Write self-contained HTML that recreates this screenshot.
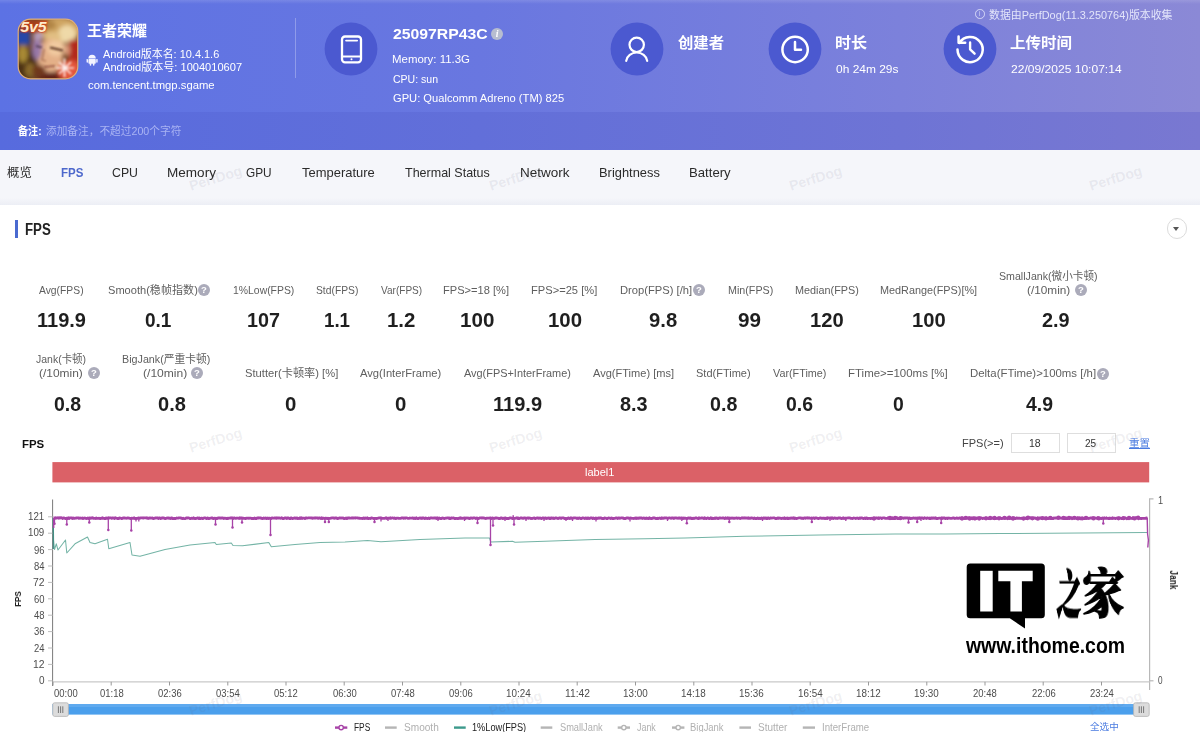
<!DOCTYPE html>
<html lang="zh-CN">
<head>
<meta charset="utf-8">
<title>PerfDog - FPS</title>
<style>
html,body{margin:0;padding:0;}
body{width:1200px;height:732px;position:relative;overflow:hidden;background:#fff;font-family:"Liberation Sans","Noto Sans CJK SC",sans-serif;}
.t{position:absolute;white-space:nowrap;transform-origin:0 50%;line-height:28px;}
.abs{position:absolute;}
#hdr{left:0;top:0;width:1200px;height:112px;background:linear-gradient(90deg,#5c72e4 0%,#6977e0 40%,#7c81db 75%,#8b89d6 100%);}
#sub{left:0;top:112px;width:1200px;height:37.5px;background:linear-gradient(90deg,#576bde 0%,#626fd9 40%,#6e74d5 75%,#7978d1 100%);}
#tabs{left:0;top:149.5px;width:1200px;height:56px;background:#f5f6fa;}
#card{left:0;top:205px;width:1200px;height:527px;background:#fff;}
.ic{border-radius:50%;color:#fff;text-align:center;box-sizing:content-box;will-change:transform;}
.wm{font-size:14px;font-weight:700;width:55px;text-align:center;color:rgba(100,100,125,0.10);transform:rotate(-17deg);transform-origin:50% 50%;}
.zj{font-family:"Liberation Serif","Noto Serif CJK SC",serif;font-weight:900;line-height:56px;color:#000;transform-origin:0 50%;will-change:transform;-webkit-text-stroke:1.1px #000;}
</style>
</head>
<body>
<div class="abs" id="hdr"></div>
<div class="abs" id="sub"></div>
<div class="abs" id="tabs"></div>
<div class="abs" id="card"></div>
<div class="abs" style="left:0;top:0;width:1200px;height:4px;background:linear-gradient(180deg,rgba(255,255,255,0.13),rgba(255,255,255,0))"></div>
<div class="abs" style="left:294.5px;top:18px;width:1.5px;height:60px;background:rgba(255,255,255,0.28)"></div>
<svg class="abs" style="left:17px;top:18px" width="62" height="62" viewBox="0 0 62 62">
<defs><clipPath id="gi"><rect x="1.5" y="1.5" width="59" height="59" rx="12" ry="12"/></clipPath>
<filter id="b3" x="-30%" y="-30%" width="160%" height="160%"><feGaussianBlur stdDeviation="2"/></filter>
<filter id="b1" x="-30%" y="-30%" width="160%" height="160%"><feGaussianBlur stdDeviation="0.9"/></filter></defs>
<rect x="1" y="1" width="60" height="60" rx="12.5" fill="#d9a36a"/>
<g clip-path="url(#gi)">
<rect x="0" y="0" width="62" height="62" fill="#6e4426"/>
<g filter="url(#b3)">
<rect x="-4" y="10" width="17" height="17" fill="#2546a8"/>
<ellipse cx="9" cy="46" rx="11" ry="16" fill="#4e3214"/>
<ellipse cx="6" cy="36" rx="5" ry="9" fill="#a88a34"/>
<ellipse cx="13" cy="52" rx="5" ry="7" fill="#8a6a2a"/>
<ellipse cx="42" cy="12" rx="22" ry="13" fill="#cfa562"/>
<ellipse cx="50" cy="16" rx="9" ry="9" fill="#efd9a8"/>
<ellipse cx="30" cy="7" rx="9" ry="5" fill="#b08444"/>
<ellipse cx="36" cy="18" rx="8" ry="4" fill="#e2c084"/>
<rect x="52" y="22" width="12" height="22" fill="#b32a1a"/>
<ellipse cx="33" cy="38" rx="13" ry="17" fill="#e4b088"/>
<ellipse cx="39" cy="30" rx="9" ry="8" fill="#f2caa0"/>
<ellipse cx="20" cy="30" rx="5" ry="12" fill="#9878a8"/>
<ellipse cx="21" cy="18" rx="5" ry="5" fill="#b49ab8"/>
<ellipse cx="34" cy="59" rx="14" ry="5" fill="#5e2014"/>
<ellipse cx="22" cy="53" rx="7" ry="6" fill="#70381e"/>
<ellipse cx="53" cy="53" rx="12" ry="11" fill="#e4573a"/>
<ellipse cx="50" cy="32" rx="3" ry="6" fill="#d89a78"/>
</g>
<g filter="url(#b1)">
<path d="M33 29.5 L46 32.5" stroke="#5a3420" stroke-width="2.2" fill="none"/>
<path d="M19 28 L25 29.5" stroke="#4a3448" stroke-width="1.8" fill="none"/>
<path d="M27 31 L25 42 L29 43" stroke="#b07858" stroke-width="1.6" fill="none"/>
<path d="M27 49 L38 48" stroke="#8a4a38" stroke-width="1.6" fill="none"/>
<path d="M47.5 40.5 L47.5 59 M39 50 L57 50 M42 44 L54 56 M54 44 L42 56" stroke="#fff" stroke-width="1.7" fill="none" opacity="0.92"/>
<rect x="4" y="2" width="27" height="12.5" fill="#c03a18" opacity="0.6" transform="skewX(-8)"/>
</g>
<text x="3.2" y="14.2" font-family="'Liberation Sans',sans-serif" font-weight="700" font-style="italic" font-size="14" fill="#fdeccc" stroke="#d0451c" stroke-width="0.9" paint-order="stroke" textLength="26.5" lengthAdjust="spacingAndGlyphs">5v5</text>
</g>
<rect x="1.2" y="1.2" width="59.6" height="59.6" rx="12.3" fill="none" stroke="#e3b27a" stroke-width="1.2" opacity="0.9"/>
</svg>
<svg class="abs" style="left:86.4px;top:54.2px" width="12.2" height="12.4" viewBox="0 0 13 13">
<path d="M2.6 4.6 A3.9 3.9 0 0 1 10.4 4.6 Z" fill="#f3f4ff"/>
<rect x="2.6" y="5.1" width="7.8" height="5.2" rx="0.8" fill="#f3f4ff"/>
<rect x="0.6" y="5.1" width="1.5" height="4.2" rx="0.75" fill="#f3f4ff"/>
<rect x="10.9" y="5.1" width="1.5" height="4.2" rx="0.75" fill="#f3f4ff"/>
<rect x="4" y="9.5" width="1.6" height="3" rx="0.8" fill="#f3f4ff"/>
<rect x="7.4" y="9.5" width="1.6" height="3" rx="0.8" fill="#f3f4ff"/>
</svg>
<svg class="abs" style="left:324.1px;top:21.5px" width="54" height="54" viewBox="324.1 21.5 54 54"><circle cx="351.1" cy="48.5" r="26.4" fill="#4b59d0"/><rect x="342.1" y="36" width="19" height="25.8" rx="3" fill="none" stroke="#fff" stroke-width="2.3"/>
<line x1="346.2" y1="40.1" x2="357.2" y2="40.1" stroke="#fff" stroke-width="1.9" stroke-linecap="round"/>
<line x1="342.1" y1="56" x2="361.1" y2="56" stroke="#fff" stroke-width="2"/>
<circle cx="351.6" cy="58.8" r="1" fill="#fff"/></svg>
<svg class="abs" style="left:610.2px;top:21.5px" width="54" height="54" viewBox="610.2 21.5 54 54"><circle cx="637.2" cy="48.5" r="26.4" fill="#4b59d0"/><circle cx="636.9" cy="44.3" r="7.2" fill="none" stroke="#fff" stroke-width="2.2"/>
<path d="M626.4 60.3 A10.6 9.6 0 0 1 647.4 60.3" fill="none" stroke="#fff" stroke-width="2.2" stroke-linecap="round"/></svg>
<svg class="abs" style="left:767.6px;top:21.5px" width="54" height="54" viewBox="767.6 21.5 54 54"><circle cx="794.6" cy="48.5" r="26.4" fill="#4b59d0"/><circle cx="794.7" cy="49" r="12.7" fill="none" stroke="#fff" stroke-width="2.5"/>
<path d="M794.6 41.4 V49.3 H800.6" fill="none" stroke="#fff" stroke-width="2.5" stroke-linecap="round" stroke-linejoin="round"/></svg>
<svg class="abs" style="left:942.6px;top:21.5px" width="54" height="54" viewBox="942.6 21.5 54 54"><circle cx="969.6" cy="48.5" r="26.4" fill="#4b59d0"/><path d="M959.0 42.4 A12.6 12.6 0 1 1 957.1 49.1" fill="none" stroke="#fff" stroke-width="2.5" stroke-linecap="round"/>
<path d="M958.2 36 V42.3 H964.8" fill="none" stroke="#fff" stroke-width="2.5" stroke-linecap="round" stroke-linejoin="round"/>
<path d="M969.7 42 V48.8 L974.2 53.2" fill="none" stroke="#fff" stroke-width="2.4" stroke-linecap="round" stroke-linejoin="round"/></svg>
<div class="abs ic" style="left:491px;top:28px;width:12.4px;height:12.4px;background:#b7bdd0;font-size:10px;line-height:12.4px;font-style:italic;font-weight:700;font-family:'Liberation Serif',serif">i</div>
<div class="abs ic" style="left:974.5px;top:9px;width:7.6px;height:7.6px;border:0.9px solid #d5d8f6;background:none;color:#d5d8f6;font-size:6.5px;line-height:7.6px">i</div>
<div class="abs" style="left:0;top:198px;width:1200px;height:7px;background:linear-gradient(180deg,#f5f6fa,#eceef5)"></div>
<div class="abs" style="left:15px;top:220px;width:2.6px;height:17.5px;background:#4a6ad0"></div>
<div class="abs" style="left:1166.6px;top:218px;width:18.6px;height:18.6px;border-radius:50%;border:1px solid #dcdcdc;box-sizing:content-box"></div>
<div class="abs" style="left:1173.4px;top:226.6px;width:0;height:0;border-left:3.1px solid transparent;border-right:3.1px solid transparent;border-top:4.4px solid #555"></div>
<div class="abs ic" style="left:198.4px;top:283.5px;width:12px;height:12px;background:#ababba;font-size:9.5px;line-height:12.4px;font-weight:700">?</div>
<div class="abs ic" style="left:693.3px;top:283.5px;width:12px;height:12px;background:#ababba;font-size:9.5px;line-height:12.4px;font-weight:700">?</div>
<div class="abs ic" style="left:1075.3px;top:283.6px;width:12px;height:12px;background:#ababba;font-size:9.5px;line-height:12.4px;font-weight:700">?</div>
<div class="abs ic" style="left:87.8px;top:367.4px;width:12px;height:12px;background:#ababba;font-size:9.5px;line-height:12.4px;font-weight:700">?</div>
<div class="abs ic" style="left:191.0px;top:367.4px;width:12px;height:12px;background:#ababba;font-size:9.5px;line-height:12.4px;font-weight:700">?</div>
<div class="abs ic" style="left:1097.3px;top:367.6px;width:12px;height:12px;background:#ababba;font-size:9.5px;line-height:12.4px;font-weight:700">?</div>
<div class="abs" style="left:1010.5px;top:433px;width:47px;height:18px;border:1px solid #dedede;box-sizing:content-box;background:#fff"></div>
<div class="abs" style="left:1066.5px;top:433px;width:47px;height:18px;border:1px solid #dedede;box-sizing:content-box;background:#fff"></div>
<svg class="abs" style="left:0;top:455px" width="1200" height="277" viewBox="0 455 1200 277">
<rect x="52.4" y="462.1" width="1096.8" height="20.3" fill="#db6167"/>
<line x1="52.6" y1="499.5" x2="52.6" y2="686" stroke="#7a7a7a" stroke-width="1"/>
<path d="M1153.5 498.8 H1149.6 V690" fill="none" stroke="#b8b8b8" stroke-width="1.2"/>
<line x1="1149.6" y1="680.8" x2="1153.5" y2="680.8" stroke="#b8b8b8" stroke-width="1.2"/>
<line x1="52.6" y1="681.8" x2="1149.6" y2="681.8" stroke="#c9c9c9" stroke-width="1.2"/>
<line x1="48" y1="516.8" x2="52.6" y2="516.8" stroke="#bdbdbd" stroke-width="1"/>
<line x1="48" y1="533.2" x2="52.6" y2="533.2" stroke="#bdbdbd" stroke-width="1"/>
<line x1="48" y1="549.6" x2="52.6" y2="549.6" stroke="#bdbdbd" stroke-width="1"/>
<line x1="48" y1="566" x2="52.6" y2="566" stroke="#bdbdbd" stroke-width="1"/>
<line x1="48" y1="582.4" x2="52.6" y2="582.4" stroke="#bdbdbd" stroke-width="1"/>
<line x1="48" y1="598.8" x2="52.6" y2="598.8" stroke="#bdbdbd" stroke-width="1"/>
<line x1="48" y1="615.2" x2="52.6" y2="615.2" stroke="#bdbdbd" stroke-width="1"/>
<line x1="48" y1="631.6" x2="52.6" y2="631.6" stroke="#bdbdbd" stroke-width="1"/>
<line x1="48" y1="648" x2="52.6" y2="648" stroke="#bdbdbd" stroke-width="1"/>
<line x1="48" y1="664.4" x2="52.6" y2="664.4" stroke="#bdbdbd" stroke-width="1"/>
<line x1="48" y1="680.8" x2="52.6" y2="680.8" stroke="#bdbdbd" stroke-width="1"/>
<line x1="53.0" y1="681.8" x2="53.0" y2="685.5" stroke="#999" stroke-width="1"/>
<line x1="111.2" y1="681.8" x2="111.2" y2="685.5" stroke="#999" stroke-width="1"/>
<line x1="169.5" y1="681.8" x2="169.5" y2="685.5" stroke="#999" stroke-width="1"/>
<line x1="227.8" y1="681.8" x2="227.8" y2="685.5" stroke="#999" stroke-width="1"/>
<line x1="286.0" y1="681.8" x2="286.0" y2="685.5" stroke="#999" stroke-width="1"/>
<line x1="344.2" y1="681.8" x2="344.2" y2="685.5" stroke="#999" stroke-width="1"/>
<line x1="402.5" y1="681.8" x2="402.5" y2="685.5" stroke="#999" stroke-width="1"/>
<line x1="460.8" y1="681.8" x2="460.8" y2="685.5" stroke="#999" stroke-width="1"/>
<line x1="519.0" y1="681.8" x2="519.0" y2="685.5" stroke="#999" stroke-width="1"/>
<line x1="577.2" y1="681.8" x2="577.2" y2="685.5" stroke="#999" stroke-width="1"/>
<line x1="635.5" y1="681.8" x2="635.5" y2="685.5" stroke="#999" stroke-width="1"/>
<line x1="693.8" y1="681.8" x2="693.8" y2="685.5" stroke="#999" stroke-width="1"/>
<line x1="752.0" y1="681.8" x2="752.0" y2="685.5" stroke="#999" stroke-width="1"/>
<line x1="810.2" y1="681.8" x2="810.2" y2="685.5" stroke="#999" stroke-width="1"/>
<line x1="868.5" y1="681.8" x2="868.5" y2="685.5" stroke="#999" stroke-width="1"/>
<line x1="926.8" y1="681.8" x2="926.8" y2="685.5" stroke="#999" stroke-width="1"/>
<line x1="985.0" y1="681.8" x2="985.0" y2="685.5" stroke="#999" stroke-width="1"/>
<line x1="1043.2" y1="681.8" x2="1043.2" y2="685.5" stroke="#999" stroke-width="1"/>
<line x1="1101.5" y1="681.8" x2="1101.5" y2="685.5" stroke="#999" stroke-width="1"/>
<polyline fill="none" stroke="#74b4a6" stroke-width="1.05" stroke-linejoin="round" points="53.3,518 53.6,540 54.5,549.5 56.3,543.8 58,550 65.5,540 66.8,553 75,543.8 87.5,537 90,542.5 95,543.8 107.5,539.3 108.8,548.8 130,542.5 132,555 140,556.3 165,549.5 190,545 215,542.5 216.3,544.5 231.3,543 233,545.5 242.5,545.8 268.8,542.5 271.3,546.8 295,544.5 320,542.5 345,542 367.5,540.5 381,541.8 420,539.5 465,538 489.5,538 490.8,542 512.5,541.3 515,542.3 545,541.3 595,539.5 645,538.8 685,538 745,536.3 820,535 895,534 945,534 1000,533.6 1146,532.5 1148,532.5"/>
<line x1="53.3" y1="518" x2="53.3" y2="549" stroke="#3d8c80" stroke-width="1.2"/>
<polyline fill="none" stroke="#a743a7" stroke-width="2.8" stroke-linejoin="round" points="53.6,518.0 54.3,517.8 55.0,518.4 55.7,517.7 56.4,518.2 57.1,518.0 57.8,517.7 58.5,518.2 59.2,517.6 59.9,518.1 60.6,517.7 61.3,517.7 62.0,518.1 62.7,518.5 63.4,517.9 64.1,518.0 64.8,518.3 65.5,518.6 66.2,518.3 66.9,518.1 67.6,518.6 68.3,517.8 69.0,518.5 69.7,518.0 70.4,517.9 71.1,517.9 71.8,518.0 72.5,518.5 73.2,517.9 73.9,518.3 74.6,518.3 75.3,518.1 76.0,518.2 76.7,517.8 77.4,517.8 78.1,517.9 78.8,518.4 79.5,518.1 80.2,518.0 80.9,518.3 81.6,518.2 82.3,518.0 83.0,518.5 83.7,518.4 84.4,518.0 85.1,518.3 85.8,518.2 86.5,518.5 87.2,518.4 87.9,518.0 88.6,518.6 89.3,517.9 90.0,518.1 90.7,518.4 91.4,517.9 92.1,518.2 92.8,517.8 93.5,518.4 94.2,518.4 94.9,518.3 95.6,518.5 96.3,518.0 97.0,518.4 97.7,518.3 98.4,518.3 99.1,518.2 99.8,518.5 100.5,518.6 101.2,518.2 101.9,518.3 102.6,517.8 103.3,518.4 104.0,518.3 104.7,518.6 105.4,518.5 106.1,518.0 106.8,518.1 107.5,518.4 108.2,517.8 108.9,518.2 109.6,517.9 110.3,517.9 111.0,517.8 111.7,518.4 112.4,517.9 113.1,518.0 113.8,518.1 114.5,518.5 115.2,517.8 115.9,518.2 116.6,518.2 117.3,518.5 118.0,518.5 118.7,518.5 119.4,518.0 120.1,518.1 120.8,518.1 121.5,518.5 122.2,518.6 122.9,517.9 123.6,517.9 124.3,518.0 125.0,518.0 125.7,518.2 126.4,518.3 127.1,518.0 127.8,517.8 128.5,518.1 129.2,518.1 129.9,518.3 130.6,518.6 131.3,518.4 132.0,518.2 132.7,518.3 133.4,518.4 134.1,517.8 134.8,518.6 135.5,518.5 136.2,518.5 136.9,518.5 137.6,518.1 138.3,518.1 139.0,517.8 139.7,518.3 140.4,517.8 141.1,517.8 141.8,517.9 142.5,517.9 143.2,518.1 143.9,517.8 144.6,517.8 145.3,517.9 146.0,517.8 146.7,518.1 147.4,517.8 148.1,518.5 148.8,518.3 149.5,517.9 150.2,518.0 150.9,518.1 151.6,518.1 152.3,517.9 153.0,518.5 153.7,518.6 154.4,518.2 155.1,518.2 155.8,517.8 156.5,517.8 157.2,518.1 157.9,518.0 158.6,518.5 159.3,517.9 160.0,517.8 160.7,518.6 161.4,518.2 162.1,517.9 162.8,518.2 163.5,517.8 164.2,518.2 164.9,518.6 165.6,518.5 166.3,518.4 167.0,518.0 167.7,518.1 168.4,517.9 169.1,518.4 169.8,518.2 170.5,518.5 171.2,518.0 171.9,518.0 172.6,518.5 173.3,518.6 174.0,518.5 174.7,518.5 175.4,518.5 176.1,518.4 176.8,518.0 177.5,518.2 178.2,518.1 178.9,517.8 179.6,517.8 180.3,518.0 181.0,518.0 181.7,518.4 182.4,518.6 183.1,518.2 183.8,518.6 184.5,518.6 185.2,518.6 185.9,518.1 186.6,517.9 187.3,518.0 188.0,517.9 188.7,517.9 189.4,518.3 190.1,518.6 190.8,518.5 191.5,518.2 192.2,518.3 192.9,518.5 193.6,517.8 194.3,518.3 195.0,518.6 195.7,518.5 196.4,518.4 197.1,518.2 197.8,517.9 198.5,518.5 199.2,518.0 199.9,518.5 200.6,518.6 201.3,518.1 202.0,518.1 202.7,518.6 203.4,518.4 204.1,517.9 204.8,517.9 205.5,517.9 206.2,518.6 206.9,518.5 207.6,517.9 208.3,518.5 209.0,518.6 209.7,518.3 210.4,518.1 211.1,518.2 211.8,517.9 212.5,517.8 213.2,518.6 213.9,518.3 214.6,518.2 215.3,518.6 216.0,518.1 216.7,518.5 217.4,518.5 218.1,517.9 218.8,518.0 219.5,518.0 220.2,518.0 220.9,518.3 221.6,518.0 222.3,518.1 223.0,517.9 223.7,518.6 224.4,518.1 225.1,518.2 225.8,518.3 226.5,518.6 227.2,518.1 227.9,518.6 228.6,518.2 229.3,518.2 230.0,518.2 230.7,517.8 231.4,518.1 232.1,517.9 232.8,517.8 233.5,518.5 234.2,517.9 234.9,518.2 235.6,518.4 236.3,518.3 237.0,518.0 237.7,518.2 238.4,518.2 239.1,518.5 239.8,517.8 240.5,518.3 241.2,518.0 241.9,518.0 242.6,518.4 243.3,518.2 244.0,518.3 244.7,518.4 245.4,518.6 246.1,518.1 246.8,518.3 247.5,518.2 248.2,518.2 248.9,518.4 249.6,518.2 250.3,518.2 251.0,518.2 251.7,518.6 252.4,518.4 253.1,518.5 253.8,518.6 254.5,518.0 255.2,518.3 255.9,518.6 256.6,518.5 257.3,517.9 258.0,517.9 258.7,518.1 259.4,517.8 260.1,518.0 260.8,517.8 261.5,518.4 262.2,518.5 262.9,518.6 263.6,517.9 264.3,518.4 265.0,518.3 265.7,517.9 266.4,518.5 267.1,518.6 267.8,517.9 268.5,518.6 269.2,518.1 269.9,518.2 270.6,518.6 271.3,518.5 272.0,517.9 272.7,518.1 273.4,518.2 274.1,518.1 274.8,517.9 275.5,518.0 276.2,518.4 276.9,517.8 277.6,518.2 278.3,518.1 279.0,517.8 279.7,518.0 280.4,518.3 281.1,518.2 281.8,517.8 282.5,518.6 283.2,518.5 283.9,518.6 284.6,517.8 285.3,518.0 286.0,517.8 286.7,518.5 287.4,518.0 288.1,517.9 288.8,518.1 289.5,518.6 290.2,518.5 290.9,518.0 291.6,517.9 292.3,518.6 293.0,518.3 293.7,518.4 294.4,517.8 295.1,517.8 295.8,518.4 296.5,518.1 297.2,517.8 297.9,518.6 298.6,518.3 299.3,518.5 300.0,517.8 300.7,518.5 301.4,517.8 302.1,518.5 302.8,518.2 303.5,518.1 304.2,518.2 304.9,518.6 305.6,518.0 306.3,517.9 307.0,518.2 307.7,518.0 308.4,517.8 309.1,517.9 309.8,517.8 310.5,517.9 311.2,518.0 311.9,518.0 312.6,518.4 313.3,518.0 314.0,518.2 314.7,517.9 315.4,518.1 316.1,517.8 316.8,518.0 317.5,517.8 318.2,518.4 318.9,518.2 319.6,517.9 320.3,518.2 321.0,518.6 321.7,517.8 322.4,518.5 323.1,518.1 323.8,518.2 324.5,518.5 325.2,518.1 325.9,518.2 326.6,518.4 327.3,518.6 328.0,518.1 328.7,518.5 329.4,518.4 330.1,518.3 330.8,518.1 331.5,518.1 332.2,517.8 332.9,517.9 333.6,517.8 334.3,518.4 335.0,518.0 335.7,517.9 336.4,517.8 337.1,518.5 337.8,518.5 338.5,518.4 339.2,518.0 339.9,518.0 340.6,518.0 341.3,518.2 342.0,517.9 342.7,518.2 343.4,518.0 344.1,518.6 344.8,518.6 345.5,518.2 346.2,518.0 346.9,518.6 347.6,518.0 348.3,518.1 349.0,517.8 349.7,518.1 350.4,518.2 351.1,518.2 351.8,517.9 352.5,518.2 353.2,517.8 353.9,518.0 354.6,517.8 355.3,518.1 356.0,517.8 356.7,517.8 357.4,518.0 358.1,518.0 358.8,518.3 359.5,518.2 360.2,518.4 360.9,518.3 361.6,518.4 362.3,518.5 363.0,518.1 363.7,518.0 364.4,518.6 365.1,517.9 365.8,518.4 366.5,518.3 367.2,517.8 367.9,518.5 368.6,518.6 369.3,518.3 370.0,518.4 370.7,518.5 371.4,517.9 372.1,518.2 372.8,518.2 373.5,518.5 374.2,518.5 374.9,518.5 375.6,518.3 376.3,518.6 377.0,518.4 377.7,518.4 378.4,518.0 379.1,517.8 379.8,517.9 380.5,518.1 381.2,517.8 381.9,518.5 382.6,518.3 383.3,518.3 384.0,518.3 384.7,518.4 385.4,518.2 386.1,517.8 386.8,518.5 387.5,518.4 388.2,518.2 388.9,518.2 389.6,518.3 390.3,517.8 391.0,518.4 391.7,518.0 392.4,517.8 393.1,518.0 393.8,518.4 394.5,517.9 395.2,518.4 395.9,518.6 396.6,518.2 397.3,518.1 398.0,518.2 398.7,518.4 399.4,518.4 400.1,518.3 400.8,518.3 401.5,517.8 402.2,517.9 402.9,518.0 403.6,518.4 404.3,518.0 405.0,518.3 405.7,517.8 406.4,517.8 407.1,518.0 407.8,518.4 408.5,518.4 409.2,518.4 409.9,518.0 410.6,518.2 411.3,518.2 412.0,518.2 412.7,517.9 413.4,518.6 414.1,517.9 414.8,518.6 415.5,518.6 416.2,517.8 416.9,518.2 417.6,518.5 418.3,518.6 419.0,518.2 419.7,518.0 420.4,517.9 421.1,518.6 421.8,517.9 422.5,518.3 423.2,517.9 423.9,518.2 424.6,518.6 425.3,517.9 426.0,518.5 426.7,518.2 427.4,518.5 428.1,518.4 428.8,518.0 429.5,518.6 430.2,518.2 430.9,517.8 431.6,517.8 432.3,518.2 433.0,518.2 433.7,518.0 434.4,517.9 435.1,518.1 435.8,518.0 436.5,518.5 437.2,517.8 437.9,518.4 438.6,518.5 439.3,517.9 440.0,518.6 440.7,518.4 441.4,518.6 442.1,518.0 442.8,518.1 443.5,518.1 444.2,518.6 444.9,518.3 445.6,518.1 446.3,518.1 447.0,518.0 447.7,517.8 448.4,517.8 449.1,518.5 449.8,518.0 450.5,518.6 451.2,518.0 451.9,518.0 452.6,518.2 453.3,517.9 454.0,518.1 454.7,518.6 455.4,518.5 456.1,518.5 456.8,518.3 457.5,518.6 458.2,518.6 458.9,518.2 459.6,518.4 460.3,517.8 461.0,518.4 461.7,518.2 462.4,518.4 463.1,518.3 463.8,518.0 464.5,517.8 465.2,518.6 465.9,517.9 466.6,518.2 467.3,518.1 468.0,518.0 468.7,518.4 469.4,518.6 470.1,518.0 470.8,518.3 471.5,518.0 472.2,518.3 472.9,518.1 473.6,517.9 474.3,517.9 475.0,517.9 475.7,518.6 476.4,518.2 477.1,517.9 477.8,518.6 478.5,518.6 479.2,518.2 479.9,517.9 480.6,517.9 481.3,517.8 482.0,518.1 482.7,517.8 483.4,518.0 484.1,518.0 484.8,518.3 485.5,518.5 486.2,518.4 486.9,518.1 487.6,518.1 488.3,518.2 489.0,518.1 489.7,518.1 490.4,517.8 491.1,518.0 491.8,518.6 492.5,517.9 493.2,518.2 493.9,518.3 494.6,518.5 495.3,517.9 496.0,518.0 496.7,518.0 497.4,518.1 498.1,518.2 498.8,518.6 499.5,518.5 500.2,518.5 500.9,517.8 501.6,517.8 502.3,518.4 503.0,518.6 503.7,518.2 504.4,518.3 505.1,517.8 505.8,518.1 506.5,518.6 507.2,518.5 507.9,518.5 508.6,518.6 509.3,518.0 510.0,517.8 510.7,517.9 511.4,518.2 512.1,518.4 512.8,518.6 513.5,518.4 514.2,518.3 514.9,518.4 515.6,518.2 516.3,518.2 517.0,517.8 517.7,518.5 518.4,518.0 519.1,518.6 519.8,518.3 520.5,518.0 521.2,517.9 521.9,518.0 522.6,518.3 523.3,518.4 524.0,517.9 524.7,517.8 525.4,518.2 526.1,518.3 526.8,518.1 527.5,518.0 528.2,518.3 528.9,517.8 529.6,518.0 530.3,518.2 531.0,518.6 531.7,518.3 532.4,518.5 533.1,518.2 533.8,518.0 534.5,518.0 535.2,518.6 535.9,518.4 536.6,518.0 537.3,517.8 538.0,518.2 538.7,518.4 539.4,518.1 540.1,518.0 540.8,518.4 541.5,518.6 542.2,518.0 542.9,517.8 543.6,518.1 544.3,518.1 545.0,518.4 545.7,517.9 546.4,518.5 547.1,518.4 547.8,518.2 548.5,517.9 549.2,518.6 549.9,518.0 550.6,518.5 551.3,518.0 552.0,517.9 552.7,518.4 553.4,518.0 554.1,518.6 554.8,518.2 555.5,517.9 556.2,518.0 556.9,518.1 557.6,518.3 558.3,518.6 559.0,517.9 559.7,518.1 560.4,517.9 561.1,518.6 561.8,517.9 562.5,517.8 563.2,517.8 563.9,518.1 564.6,518.6 565.3,518.5 566.0,518.4 566.7,518.6 567.4,518.6 568.1,518.0 568.8,517.9 569.5,518.6 570.2,518.4 570.9,517.8 571.6,518.3 572.3,518.1 573.0,518.1 573.7,518.0 574.4,517.9 575.1,517.8 575.8,518.0 576.5,518.1 577.2,518.6 577.9,517.9 578.6,518.6 579.3,517.9 580.0,518.1 580.7,518.5 581.4,518.5 582.1,518.1 582.8,517.8 583.5,518.2 584.2,518.1 584.9,518.6 585.6,517.9 586.3,518.1 587.0,518.6 587.7,517.8 588.4,518.1 589.1,518.5 589.8,518.4 590.5,517.8 591.2,517.8 591.9,517.8 592.6,518.6 593.3,518.0 594.0,518.4 594.7,518.6 595.4,518.1 596.1,518.0 596.8,518.6 597.5,518.3 598.2,518.0 598.9,518.4 599.6,518.0 600.3,518.0 601.0,517.8 601.7,518.4 602.4,518.6 603.1,518.3 603.8,518.6 604.5,517.8 605.2,518.0 605.9,518.2 606.6,518.6 607.3,518.6 608.0,518.1 608.7,518.0 609.4,518.1 610.1,518.2 610.8,518.6 611.5,517.9 612.2,518.5 612.9,518.4 613.6,518.5 614.3,518.4 615.0,518.3 615.7,518.0 616.4,518.0 617.1,518.1 617.8,518.5 618.5,517.8 619.2,517.9 619.9,518.4 620.6,518.0 621.3,517.8 622.0,517.8 622.7,518.2 623.4,518.0 624.1,518.6 624.8,518.5 625.5,518.6 626.2,518.0 626.9,517.8 627.6,517.8 628.3,518.2 629.0,518.4 629.7,518.2 630.4,518.0 631.1,518.1 631.8,518.3 632.5,518.4 633.2,518.4 633.9,518.5 634.6,518.3 635.3,517.9 636.0,518.5 636.7,518.0 637.4,518.3 638.1,518.1 638.8,518.4 639.5,517.9 640.2,518.0 640.9,518.0 641.6,517.9 642.3,518.5 643.0,518.3 643.7,518.0 644.4,518.1 645.1,518.6 645.8,518.2 646.5,518.0 647.2,518.5 647.9,518.3 648.6,518.6 649.3,517.8 650.0,518.2 650.7,518.5 651.4,518.5 652.1,518.6 652.8,517.8 653.5,518.0 654.2,517.9 654.9,517.9 655.6,518.6 656.3,518.3 657.0,518.6 657.7,518.1 658.4,518.5 659.1,518.2 659.8,518.0 660.5,518.4 661.2,518.6 661.9,517.8 662.6,518.3 663.3,518.3 664.0,517.9 664.7,518.1 665.4,517.9 666.1,517.9 666.8,518.0 667.5,518.3 668.2,518.3 668.9,517.9 669.6,517.8 670.3,518.0 671.0,518.4 671.7,517.9 672.4,518.0 673.1,517.9 673.8,518.5 674.5,518.2 675.2,517.8 675.9,517.8 676.6,518.1 677.3,518.2 678.0,518.3 678.7,517.8 679.4,517.9 680.1,518.4 680.8,518.1 681.5,518.0 682.2,518.0 682.9,518.6 683.6,518.0 684.3,518.3 685.0,518.1 685.7,518.1 686.4,518.5 687.1,518.6 687.8,518.1 688.5,517.9 689.2,518.4 689.9,517.9 690.6,517.8 691.3,518.6 692.0,518.1 692.7,518.5 693.4,518.1 694.1,518.5 694.8,518.2 695.5,517.9 696.2,517.8 696.9,518.2 697.6,518.3 698.3,518.6 699.0,517.8 699.7,518.3 700.4,518.1 701.1,518.2 701.8,517.9 702.5,518.0 703.2,518.2 703.9,518.6 704.6,517.8 705.3,518.2 706.0,518.5 706.7,518.6 707.4,517.9 708.1,517.9 708.8,518.6 709.5,518.6 710.2,518.2 710.9,517.8 711.6,518.6 712.3,518.1 713.0,518.6 713.7,518.3 714.4,518.5 715.1,517.9 715.8,518.5 716.5,517.9 717.2,518.1 717.9,518.5 718.6,518.5 719.3,517.9 720.0,517.9 720.7,518.1 721.4,518.2 722.1,518.1 722.8,517.9 723.5,518.0 724.2,518.4 724.9,518.6 725.6,517.8 726.3,518.3 727.0,518.4 727.7,517.8 728.4,518.5 729.1,517.9 729.8,518.3 730.5,518.2 731.2,518.3 731.9,518.0 732.6,518.1 733.3,518.3 734.0,518.1 734.7,518.3 735.4,518.2 736.1,518.1 736.8,517.8 737.5,518.3 738.2,518.2 738.9,518.0 739.6,518.4 740.3,518.5 741.0,518.2 741.7,517.9 742.4,518.2 743.1,517.8 743.8,517.9 744.5,518.1 745.2,517.8 745.9,518.1 746.6,518.2 747.3,517.8 748.0,518.3 748.7,517.8 749.4,518.4 750.1,518.4 750.8,518.2 751.5,517.8 752.2,518.2 752.9,518.1 753.6,518.6 754.3,517.9 755.0,518.5 755.7,518.6 756.4,518.4 757.1,518.5 757.8,517.9 758.5,518.6 759.2,518.2 759.9,518.6 760.6,518.6 761.3,517.9 762.0,518.5 762.7,518.6 763.4,517.8 764.1,518.1 764.8,518.4 765.5,517.9 766.2,518.6 766.9,518.0 767.6,518.5 768.3,517.9 769.0,518.2 769.7,518.6 770.4,517.9 771.1,518.0 771.8,518.2 772.5,518.0 773.2,517.8 773.9,517.9 774.6,517.9 775.3,518.6 776.0,518.4 776.7,518.6 777.4,517.9 778.1,518.5 778.8,517.9 779.5,518.2 780.2,518.3 780.9,518.1 781.6,518.5 782.3,518.2 783.0,518.3 783.7,518.5 784.4,517.8 785.1,518.6 785.8,518.3 786.5,518.1 787.2,518.5 787.9,518.0 788.6,518.6 789.3,518.3 790.0,518.1 790.7,518.4 791.4,518.1 792.1,517.9 792.8,518.4 793.5,517.8 794.2,518.5 794.9,518.0 795.6,518.3 796.3,518.6 797.0,518.3 797.7,518.3 798.4,518.0 799.1,517.8 799.8,517.8 800.5,517.9 801.2,518.3 801.9,518.1 802.6,518.2 803.3,518.6 804.0,517.9 804.7,518.0 805.4,518.3 806.1,517.8 806.8,517.8 807.5,518.1 808.2,517.8 808.9,518.1 809.6,518.0 810.3,518.3 811.0,518.3 811.7,517.9 812.4,518.3 813.1,518.2 813.8,517.9 814.5,518.6 815.2,518.0 815.9,517.9 816.6,517.8 817.3,518.3 818.0,518.5 818.7,518.5 819.4,518.1 820.1,518.0 820.8,517.8 821.5,518.3 822.2,518.3 822.9,518.1 823.6,518.3 824.3,518.1 825.0,518.6 825.7,518.4 826.4,518.0 827.1,518.6 827.8,517.8 828.5,518.2 829.2,518.1 829.9,518.0 830.6,517.8 831.3,518.5 832.0,517.8 832.7,518.2 833.4,518.6 834.1,517.9 834.8,517.9 835.5,518.3 836.2,518.2 836.9,518.3 837.6,518.5 838.3,517.9 839.0,518.0 839.7,518.0 840.4,517.8 841.1,518.6 841.8,518.5 842.5,518.4 843.2,517.8 843.9,518.5 844.6,518.4 845.3,518.2 846.0,518.4 846.7,518.2 847.4,518.0 848.1,517.8 848.8,518.0 849.5,517.8 850.2,518.1 850.9,518.4 851.6,518.4 852.3,518.5 853.0,518.4 853.7,518.0 854.4,518.2 855.1,518.1 855.8,518.5 856.5,518.2 857.2,518.0 857.9,518.3 858.6,518.6 859.3,517.9 860.0,518.5 860.7,517.8 861.4,518.0 862.1,518.0 862.8,518.4 863.5,518.6 864.2,518.4 864.9,518.0 865.6,518.5 866.3,518.0 867.0,518.0 867.7,518.6 868.4,518.3 869.1,518.4 869.8,518.3 870.5,518.6 871.2,518.2 871.9,518.5 872.6,518.4 873.3,518.6 874.0,518.1 874.7,518.5 875.4,518.3 876.1,518.0 876.8,517.9 877.5,518.3 878.2,517.8 878.9,518.6 879.6,517.9 880.3,517.8 881.0,517.8 881.7,518.6 882.4,518.1 883.1,517.9 883.8,517.8 884.5,517.8 885.2,518.4 885.9,518.3 886.6,518.4 887.3,518.4 888.0,517.8 888.7,518.3 889.4,518.0 890.1,518.6 890.8,518.6 891.5,518.7 892.2,517.7 892.9,518.6 893.6,518.7 894.3,518.7 895.0,517.7 895.7,517.8 896.4,517.7 897.1,517.6 897.8,518.6 898.5,518.6 899.2,518.4 899.9,518.6 900.6,518.4 901.3,518.0 902.0,517.8 902.7,517.8 903.4,518.4 904.1,517.9 904.8,518.0 905.5,518.1 906.2,517.8 906.9,518.0 907.6,518.0 908.3,518.4 909.0,518.1 909.7,518.0 910.4,518.6 911.1,518.2 911.8,518.5 912.5,518.3 913.2,517.8 913.9,518.1 914.6,518.1 915.3,518.4 916.0,518.1 916.7,518.4 917.4,518.2 918.1,517.9 918.8,518.5 919.5,517.8 920.2,518.5 920.9,517.9 921.6,517.8 922.3,517.9 923.0,518.4 923.7,518.6 924.4,517.8 925.1,518.2 925.8,518.2 926.5,518.5 927.2,517.9 927.9,518.2 928.6,518.1 929.3,518.5 930.0,518.0 930.7,518.6 931.4,518.0 932.1,517.9 932.8,518.4 933.5,518.2 934.2,517.8 934.9,518.3 935.6,517.8 936.3,518.5 937.0,518.4 937.7,518.5 938.4,518.3 939.1,518.1 939.8,518.1 940.5,518.1 941.2,518.6 941.9,517.8 942.6,518.5 943.3,517.8 944.0,517.9 944.7,518.0 945.4,518.6 946.1,518.2 946.8,518.1 947.5,518.5 948.2,518.0 948.9,518.2 949.6,518.2 950.3,518.4 951.0,518.4 951.7,518.3 952.4,518.1 953.1,518.0 953.8,517.9 954.5,518.5 955.2,518.3 955.9,518.4 956.6,517.9 957.3,518.1 958.0,518.4 958.7,518.3 959.4,517.9 960.1,518.2 960.8,518.5 961.5,517.9 962.2,517.8 962.9,518.0 963.6,518.4 964.3,518.6 965.0,517.8 965.7,517.8 966.4,517.9 967.1,518.0 967.8,518.2 968.5,517.8 969.2,518.0 969.9,517.8 970.6,518.8 971.3,518.5 972.0,517.7 972.7,518.8 973.4,517.7 974.1,518.1 974.8,518.8 975.5,518.6 976.2,518.5 976.9,518.1 977.6,517.8 978.3,518.4 979.0,517.7 979.7,517.8 980.4,518.1 981.1,517.8 981.8,518.1 982.5,518.5 983.2,518.4 983.9,518.2 984.6,518.3 985.3,518.2 986.0,517.8 986.7,518.3 987.4,518.1 988.1,518.5 988.8,518.7 989.5,518.1 990.2,518.3 990.9,518.5 991.6,518.1 992.3,517.9 993.0,518.5 993.7,518.7 994.4,518.5 995.1,518.4 995.8,518.6 996.5,518.4 997.2,518.4 997.9,518.1 998.6,518.0 999.3,518.4 1000.0,517.7 1000.7,518.1 1001.4,518.5 1002.1,518.5 1002.8,518.4 1003.5,517.9 1004.2,518.1 1004.9,518.1 1005.6,518.3 1006.3,518.1 1007.0,518.4 1007.7,518.7 1008.4,517.8 1009.1,518.4 1009.8,518.5 1010.5,518.1 1011.2,518.2 1011.9,518.8 1012.6,517.6 1013.3,518.3 1014.0,517.8 1014.7,518.5 1015.4,518.6 1016.1,518.2 1016.8,517.8 1017.5,518.3 1018.2,518.2 1018.9,518.4 1019.6,518.2 1020.3,518.3 1021.0,518.5 1021.7,518.2 1022.4,518.1 1023.1,518.7 1023.8,517.9 1024.5,518.4 1025.2,518.1 1025.9,518.5 1026.6,517.7 1027.3,518.8 1028.0,518.0 1028.7,517.7 1029.4,517.9 1030.1,518.1 1030.8,517.6 1031.5,518.1 1032.2,518.1 1032.9,518.4 1033.6,518.0 1034.3,517.9 1035.0,517.9 1035.7,518.5 1036.4,518.7 1037.1,518.2 1037.8,517.9 1038.5,518.6 1039.2,518.1 1039.9,517.9 1040.6,517.8 1041.3,518.5 1042.0,518.6 1042.7,518.4 1043.4,518.2 1044.1,518.3 1044.8,517.9 1045.5,518.8 1046.2,518.0 1046.9,518.4 1047.6,518.6 1048.3,518.6 1049.0,518.2 1049.7,518.0 1050.4,518.3 1051.1,517.8 1051.8,518.6 1052.5,518.1 1053.2,518.5 1053.9,518.0 1054.6,518.1 1055.3,518.0 1056.0,518.1 1056.7,517.9 1057.4,517.8 1058.1,518.5 1058.8,517.9 1059.5,517.9 1060.2,518.0 1060.9,518.2 1061.6,518.1 1062.3,518.4 1063.0,518.4 1063.7,518.0 1064.4,518.7 1065.1,518.6 1065.8,517.7 1066.5,518.6 1067.2,518.7 1067.9,518.5 1068.6,517.8 1069.3,518.6 1070.0,518.4 1070.7,517.6 1071.4,517.6 1072.1,518.7 1072.8,518.4 1073.5,517.9 1074.2,517.7 1074.9,517.8 1075.6,517.9 1076.3,518.5 1077.0,518.0 1077.7,517.8 1078.4,518.7 1079.1,518.6 1079.8,517.8 1080.5,518.7 1081.2,518.3 1081.9,518.5 1082.6,518.4 1083.3,518.7 1084.0,518.5 1084.7,518.6 1085.4,517.8 1086.1,518.4 1086.8,518.2 1087.5,518.4 1088.2,518.1 1088.9,518.5 1089.6,518.2 1090.3,518.0 1091.0,518.0 1091.7,517.9 1092.4,518.2 1093.1,517.7 1093.8,518.2 1094.5,517.8 1095.2,518.2 1095.9,518.2 1096.6,518.2 1097.3,518.6 1098.0,517.6 1098.7,518.6 1099.4,518.2 1100.1,518.3 1100.8,518.4 1101.5,518.6 1102.2,518.0 1102.9,518.1 1103.6,518.6 1104.3,517.8 1105.0,518.3 1105.7,518.3 1106.4,517.8 1107.1,518.3 1107.8,518.4 1108.5,518.6 1109.2,518.0 1109.9,518.6 1110.6,518.2 1111.3,518.2 1112.0,518.6 1112.7,517.8 1113.4,518.4 1114.1,518.3 1114.8,518.1 1115.5,518.5 1116.2,518.1 1116.9,518.2 1117.6,518.2 1118.3,518.5 1119.0,517.9 1119.7,518.1 1120.4,518.1 1121.1,518.3 1121.8,518.6 1122.5,518.0 1123.2,518.6 1123.9,518.1 1124.6,518.2 1125.3,517.9 1126.0,518.2 1126.7,518.8 1127.4,518.4 1128.1,518.6 1128.8,518.0 1129.5,518.0 1130.2,518.0 1130.9,518.3 1131.6,518.4 1132.3,518.5 1133.0,517.6 1133.7,518.5 1134.4,518.7 1135.1,518.3 1135.8,517.7 1136.5,518.0 1137.2,517.6 1137.9,517.8 1138.6,518.7 1139.3,518.3 1140.0,518.3 1140.7,518.5 1141.4,518.6 1142.1,518.3 1142.8,518.3 1143.5,518.3 1144.2,518.4 1144.9,518.3 1145.6,518.4 1146.3,517.9 1147.0,518.4 1147.7,518.2"/>
<circle cx="962.0" cy="518.5" r="2.15" fill="#a743a7"/>
<circle cx="965.8" cy="517.9" r="2.15" fill="#a743a7"/>
<circle cx="969.5" cy="518.5" r="2.15" fill="#a743a7"/>
<circle cx="974.9" cy="518.4" r="2.15" fill="#a743a7"/>
<circle cx="979.2" cy="518.5" r="2.15" fill="#a743a7"/>
<circle cx="986.0" cy="518.3" r="2.15" fill="#a743a7"/>
<circle cx="990.1" cy="518.0" r="2.15" fill="#a743a7"/>
<circle cx="994.6" cy="518.0" r="2.15" fill="#a743a7"/>
<circle cx="999.0" cy="518.3" r="2.15" fill="#a743a7"/>
<circle cx="1004.5" cy="517.8" r="2.15" fill="#a743a7"/>
<circle cx="1009.2" cy="517.7" r="2.15" fill="#a743a7"/>
<circle cx="1013.1" cy="518.5" r="2.15" fill="#a743a7"/>
<circle cx="1023.5" cy="518.6" r="2.15" fill="#a743a7"/>
<circle cx="1028.0" cy="517.7" r="2.15" fill="#a743a7"/>
<circle cx="1032.4" cy="518.3" r="2.15" fill="#a743a7"/>
<circle cx="1037.8" cy="518.7" r="2.15" fill="#a743a7"/>
<circle cx="1042.4" cy="518.1" r="2.15" fill="#a743a7"/>
<circle cx="1046.2" cy="518.3" r="2.15" fill="#a743a7"/>
<circle cx="1050.2" cy="517.9" r="2.15" fill="#a743a7"/>
<circle cx="1058.5" cy="517.7" r="2.15" fill="#a743a7"/>
<circle cx="1063.5" cy="517.8" r="2.15" fill="#a743a7"/>
<circle cx="1069.0" cy="517.8" r="2.15" fill="#a743a7"/>
<circle cx="1074.3" cy="517.8" r="2.15" fill="#a743a7"/>
<circle cx="1078.0" cy="518.4" r="2.15" fill="#a743a7"/>
<circle cx="1082.1" cy="518.4" r="2.15" fill="#a743a7"/>
<circle cx="1086.0" cy="517.8" r="2.15" fill="#a743a7"/>
<circle cx="1093.5" cy="518.4" r="2.15" fill="#a743a7"/>
<circle cx="1098.8" cy="518.4" r="2.15" fill="#a743a7"/>
<circle cx="1118.5" cy="518.3" r="2.15" fill="#a743a7"/>
<circle cx="1123.5" cy="518.2" r="2.15" fill="#a743a7"/>
<circle cx="1129.0" cy="518.0" r="2.15" fill="#a743a7"/>
<circle cx="1134.5" cy="518.4" r="2.15" fill="#a743a7"/>
<circle cx="1138.1" cy="517.7" r="2.15" fill="#a743a7"/>
<circle cx="874.0" cy="518.5" r="2.15" fill="#a743a7"/>
<circle cx="890.0" cy="518.0" r="2.15" fill="#a743a7"/>
<circle cx="895.1" cy="517.9" r="2.15" fill="#a743a7"/>
<circle cx="900.4" cy="518.2" r="2.15" fill="#a743a7"/>
<line x1="54.5" y1="518" x2="54.5" y2="523.8" stroke="#a743a7" stroke-width="1.3"/>
<circle cx="54.5" cy="523.8" r="1.25" fill="#a743a7"/>
<line x1="66.8" y1="518" x2="66.8" y2="524.5" stroke="#a743a7" stroke-width="1.3"/>
<circle cx="66.8" cy="524.5" r="1.25" fill="#a743a7"/>
<line x1="89.3" y1="518" x2="89.3" y2="522.5" stroke="#a743a7" stroke-width="1.3"/>
<circle cx="89.3" cy="522.5" r="1.25" fill="#a743a7"/>
<line x1="108.3" y1="518" x2="108.3" y2="530" stroke="#a743a7" stroke-width="1.3"/>
<circle cx="108.3" cy="530" r="1.25" fill="#a743a7"/>
<line x1="131.3" y1="518" x2="131.3" y2="530.5" stroke="#a743a7" stroke-width="1.3"/>
<circle cx="131.3" cy="530.5" r="1.25" fill="#a743a7"/>
<line x1="136" y1="518" x2="136" y2="521.5" stroke="#a743a7" stroke-width="1.3"/>
<line x1="138.8" y1="518" x2="138.8" y2="521.5" stroke="#a743a7" stroke-width="1.3"/>
<line x1="215.5" y1="518" x2="215.5" y2="524.5" stroke="#a743a7" stroke-width="1.3"/>
<circle cx="215.5" cy="524.5" r="1.25" fill="#a743a7"/>
<line x1="232.5" y1="518" x2="232.5" y2="527.5" stroke="#a743a7" stroke-width="1.3"/>
<circle cx="232.5" cy="527.5" r="1.25" fill="#a743a7"/>
<line x1="242" y1="518" x2="242" y2="522.5" stroke="#a743a7" stroke-width="1.3"/>
<circle cx="242" cy="522.5" r="1.25" fill="#a743a7"/>
<line x1="270.5" y1="518" x2="270.5" y2="535" stroke="#a743a7" stroke-width="1.3"/>
<circle cx="270.5" cy="535" r="1.25" fill="#a743a7"/>
<line x1="325" y1="518" x2="325" y2="522" stroke="#a743a7" stroke-width="1.3"/>
<circle cx="325" cy="522" r="1.25" fill="#a743a7"/>
<line x1="328.8" y1="518" x2="328.8" y2="522" stroke="#a743a7" stroke-width="1.3"/>
<circle cx="328.8" cy="522" r="1.25" fill="#a743a7"/>
<line x1="374.5" y1="518" x2="374.5" y2="522" stroke="#a743a7" stroke-width="1.3"/>
<circle cx="374.5" cy="522" r="1.25" fill="#a743a7"/>
<line x1="381" y1="518" x2="381" y2="521.5" stroke="#a743a7" stroke-width="1.3"/>
<line x1="388" y1="518" x2="388" y2="521" stroke="#a743a7" stroke-width="1.3"/>
<line x1="438" y1="518" x2="438" y2="521" stroke="#a743a7" stroke-width="1.3"/>
<line x1="464.5" y1="518" x2="464.5" y2="521" stroke="#a743a7" stroke-width="1.3"/>
<line x1="477.5" y1="518" x2="477.5" y2="523" stroke="#a743a7" stroke-width="1.3"/>
<circle cx="477.5" cy="523" r="1.25" fill="#a743a7"/>
<line x1="490.5" y1="518" x2="490.5" y2="545" stroke="#a743a7" stroke-width="1.3"/>
<circle cx="490.5" cy="545" r="1.25" fill="#a743a7"/>
<line x1="493" y1="518" x2="493" y2="525.5" stroke="#a743a7" stroke-width="1.3"/>
<circle cx="493" cy="525.5" r="1.25" fill="#a743a7"/>
<line x1="505" y1="518" x2="505" y2="521" stroke="#a743a7" stroke-width="1.3"/>
<line x1="514" y1="518" x2="514" y2="524.5" stroke="#a743a7" stroke-width="1.3"/>
<circle cx="514" cy="524.5" r="1.25" fill="#a743a7"/>
<line x1="526" y1="518" x2="526" y2="521" stroke="#a743a7" stroke-width="1.3"/>
<line x1="544" y1="518" x2="544" y2="521" stroke="#a743a7" stroke-width="1.3"/>
<line x1="566" y1="518" x2="566" y2="521" stroke="#a743a7" stroke-width="1.3"/>
<line x1="572.5" y1="518" x2="572.5" y2="521" stroke="#a743a7" stroke-width="1.3"/>
<line x1="596" y1="518" x2="596" y2="521.5" stroke="#a743a7" stroke-width="1.3"/>
<line x1="630" y1="518" x2="630" y2="521.5" stroke="#a743a7" stroke-width="1.3"/>
<line x1="667.5" y1="518" x2="667.5" y2="521" stroke="#a743a7" stroke-width="1.3"/>
<line x1="681.8" y1="518" x2="681.8" y2="521" stroke="#a743a7" stroke-width="1.3"/>
<line x1="686.8" y1="518" x2="686.8" y2="523.3" stroke="#a743a7" stroke-width="1.3"/>
<circle cx="686.8" cy="523.3" r="1.25" fill="#a743a7"/>
<line x1="729.3" y1="518" x2="729.3" y2="522" stroke="#a743a7" stroke-width="1.3"/>
<circle cx="729.3" cy="522" r="1.25" fill="#a743a7"/>
<line x1="762.5" y1="518" x2="762.5" y2="521" stroke="#a743a7" stroke-width="1.3"/>
<line x1="811.8" y1="518" x2="811.8" y2="522" stroke="#a743a7" stroke-width="1.3"/>
<circle cx="811.8" cy="522" r="1.25" fill="#a743a7"/>
<line x1="830" y1="518" x2="830" y2="521" stroke="#a743a7" stroke-width="1.3"/>
<line x1="845.8" y1="518" x2="845.8" y2="521" stroke="#a743a7" stroke-width="1.3"/>
<line x1="908.5" y1="518" x2="908.5" y2="522.5" stroke="#a743a7" stroke-width="1.3"/>
<circle cx="908.5" cy="522.5" r="1.25" fill="#a743a7"/>
<line x1="917.2" y1="518" x2="917.2" y2="522" stroke="#a743a7" stroke-width="1.3"/>
<circle cx="917.2" cy="522" r="1.25" fill="#a743a7"/>
<line x1="921" y1="518" x2="921" y2="521" stroke="#a743a7" stroke-width="1.3"/>
<line x1="941.2" y1="518" x2="941.2" y2="523" stroke="#a743a7" stroke-width="1.3"/>
<circle cx="941.2" cy="523" r="1.25" fill="#a743a7"/>
<line x1="1103.3" y1="518" x2="1103.3" y2="523.5" stroke="#a743a7" stroke-width="1.3"/>
<circle cx="1103.3" cy="523.5" r="1.25" fill="#a743a7"/>
<line x1="513.2" y1="518" x2="513.2" y2="515.2" stroke="#a743a7" stroke-width="1.5"/>
<polyline fill="none" stroke="#a743a7" stroke-width="1.4" points="1147.2,518 1147.6,534 1148.4,540 1147.8,547.5"/>
<line x1="53.7" y1="518" x2="53.7" y2="528" stroke="#a743a7" stroke-width="1.4"/>
<rect x="52.5" y="704" width="1096.5" height="10.6" fill="#4b9fec"/>
<rect x="52.5" y="704" width="1096.5" height="3" fill="#6db3f2" opacity="0.6"/>
<rect x="52.8" y="702.8" width="15.6" height="13.6" rx="1.8" fill="#dcdcdc" stroke="#b4b4b4" stroke-width="0.8"/>
<line x1="58.39999999999999" y1="706.3" x2="58.39999999999999" y2="713" stroke="#777" stroke-width="1"/>
<line x1="60.599999999999994" y1="706.3" x2="60.599999999999994" y2="713" stroke="#777" stroke-width="1"/>
<line x1="62.8" y1="706.3" x2="62.8" y2="713" stroke="#777" stroke-width="1"/>
<rect x="1133.6" y="702.8" width="15.6" height="13.6" rx="1.8" fill="#dcdcdc" stroke="#b4b4b4" stroke-width="0.8"/>
<line x1="1139.1999999999998" y1="706.3" x2="1139.1999999999998" y2="713" stroke="#777" stroke-width="1"/>
<line x1="1141.3999999999999" y1="706.3" x2="1141.3999999999999" y2="713" stroke="#777" stroke-width="1"/>
<line x1="1143.6" y1="706.3" x2="1143.6" y2="713" stroke="#777" stroke-width="1"/>
<line x1="335" y1="727.6" x2="347.3" y2="727.6" stroke="#a743a7" stroke-width="2.4"/>
<circle cx="341.15" cy="727.6" r="2.2" fill="#fff" stroke="#a743a7" stroke-width="1.4"/>
<line x1="385" y1="727.6" x2="396.7" y2="727.6" stroke="#b5b5b5" stroke-width="2.4"/>
<line x1="454" y1="727.6" x2="465.7" y2="727.6" stroke="#3d9a8c" stroke-width="2.4"/>
<line x1="540.7" y1="727.6" x2="552.3" y2="727.6" stroke="#b5b5b5" stroke-width="2.4"/>
<line x1="617.7" y1="727.6" x2="630" y2="727.6" stroke="#b5b5b5" stroke-width="2.4"/>
<circle cx="623.85" cy="727.6" r="2.2" fill="#fff" stroke="#b5b5b5" stroke-width="1.4"/>
<line x1="672" y1="727.6" x2="684.4" y2="727.6" stroke="#b5b5b5" stroke-width="2.4"/>
<circle cx="678.2" cy="727.6" r="2.2" fill="#fff" stroke="#b5b5b5" stroke-width="1.4"/>
<line x1="739.4" y1="727.6" x2="751" y2="727.6" stroke="#b5b5b5" stroke-width="2.4"/>
<line x1="802.8" y1="727.6" x2="815" y2="727.6" stroke="#b5b5b5" stroke-width="2.4"/>
</svg>
<svg class="abs" style="left:960px;top:558px" width="175" height="75" viewBox="960 558 175 75">
<path d="M970.2 563.5 H1041.3 Q1044.8 563.5 1044.8 567 V614.8 Q1044.8 618.3 1041.3 618.3 H1025 V628.4 L1009.8 618.3 H970.2 Q966.7 618.3 966.7 614.8 V567 Q966.7 563.5 970.2 563.5 Z" fill="#000"/>
<rect x="980.2" y="570.8" width="12.5" height="40.7" fill="#fff"/>
<path d="M998.3 570.8 H1032.7 V581.2 H1021.9 V611.5 H1010.4 V581.2 H998.3 Z" fill="#fff"/>
</svg>
<span class="t zj" style="left:1056.5px;top:567.5px;font-size:50px;transform:scale(0.5,1.05) skewX(-6deg)">之</span>
<span class="t zj" style="left:1082px;top:567px;font-size:50px;transform:scale(0.85,1.07)">家</span>
<span class="t" style="left:-2.1px;top:585px;width:40px;text-align:center;font-size:9.4px;font-weight:700;color:#1c1c1c;will-change:transform;transform-origin:50% 50%;transform:rotate(-90deg) scaleX(0.86)">FPS</span>
<span class="t" style="left:1153px;top:566.4px;width:40px;text-align:center;font-size:10px;font-weight:700;color:#2a2a2a;will-change:transform;transform-origin:50% 50%;transform:rotate(90deg) scaleX(0.84)">Jank</span>
<span class="t wm" style="left:188.0px;top:163.5px">PerfDog</span>
<span class="t wm" style="left:488.0px;top:163.5px">PerfDog</span>
<span class="t wm" style="left:788.0px;top:163.5px">PerfDog</span>
<span class="t wm" style="left:1088.0px;top:163.5px">PerfDog</span>
<span class="t wm" style="left:188.0px;top:426px">PerfDog</span>
<span class="t wm" style="left:488.0px;top:426px">PerfDog</span>
<span class="t wm" style="left:788.0px;top:426px">PerfDog</span>
<span class="t wm" style="left:1088.0px;top:426px">PerfDog</span>
<span class="t wm" style="left:188.0px;top:688.5px">PerfDog</span>
<span class="t wm" style="left:488.0px;top:688.5px">PerfDog</span>
<span class="t wm" style="left:788.0px;top:688.5px">PerfDog</span>
<span class="t wm" style="left:1088.0px;top:688.5px">PerfDog</span>
<span class="t" style="left:86.50px;top:17px;font-size:15px;color:#fff;font-weight:700;transform:scaleX(1.0010);">王者荣耀</span>
<span class="t" style="left:102.50px;top:40px;font-size:11.2px;color:#fff;transform:scaleX(0.9788);">Android版本名: 10.4.1.6</span>
<span class="t" style="left:102.50px;top:53px;font-size:11.2px;color:#fff;transform:scaleX(0.9893);">Android版本号: 1004010607</span>
<span class="t" style="left:87.50px;top:71px;font-size:11.5px;color:#fff;transform:scaleX(0.9806);">com.tencent.tmgp.sgame</span>
<span class="t" style="left:393.30px;top:20px;font-size:15.4px;color:#fff;font-weight:700;transform:scaleX(1.0250);">25097RP43C</span>
<span class="t" style="left:392.28px;top:45px;font-size:11.2px;color:#fff;transform:scaleX(1.0227);">Memory: 11.3G</span>
<span class="t" style="left:393.30px;top:65px;font-size:11.2px;color:#fff;transform:scaleX(0.9404);">CPU: sun</span>
<span class="t" style="left:393.30px;top:84px;font-size:11.2px;color:#fff;transform:scaleX(0.9971);">GPU: Qualcomm Adreno (TM) 825</span>
<span class="t" style="left:678.00px;top:29px;font-size:15px;color:#fff;font-weight:700;transform:scaleX(1.0227);">创建者</span>
<span class="t" style="left:834.93px;top:29px;font-size:15px;color:#fff;font-weight:700;transform:scaleX(1.0714);">时长</span>
<span class="t" style="left:836.00px;top:55px;font-size:11.2px;color:#fff;transform:scaleX(1.0690);">0h 24m 29s</span>
<span class="t" style="left:1009.97px;top:29px;font-size:15px;color:#fff;font-weight:700;transform:scaleX(1.0345);">上传时间</span>
<span class="t" style="left:1011.00px;top:55px;font-size:11.2px;color:#fff;transform:scaleX(1.0777);">22/09/2025 10:07:14</span>
<span class="t" style="left:988.51px;top:1px;font-size:11px;color:#e3e5fa;transform:scaleX(0.9918);">数据由PerfDog(11.3.250764)版本收集</span>
<span class="t" style="left:18.00px;top:117px;font-size:11px;color:#fff;font-weight:700;transform:scaleX(0.9200);">备注:</span>
<span class="t" style="left:46.03px;top:117px;font-size:11px;color:#a9b3f3;transform:scaleX(0.9710);">添加备注，不超过200个字符</span>
<span class="t" style="left:7.30px;top:159px;font-size:12.2px;color:#2b2b2b;transform:scaleX(1.0167);">概览</span>
<span class="t" style="left:61.39px;top:159px;font-size:12.6px;color:#4d68cc;font-weight:700;transform:scaleX(0.9130);">FPS</span>
<span class="t" style="left:112.32px;top:159px;font-size:12.6px;color:#2b2b2b;transform:scaleX(0.9760);">CPU</span>
<span class="t" style="left:167.22px;top:159px;font-size:12.6px;color:#2b2b2b;transform:scaleX(1.0756);">Memory</span>
<span class="t" style="left:246.36px;top:159px;font-size:12.6px;color:#2b2b2b;transform:scaleX(0.9385);">GPU</span>
<span class="t" style="left:302.30px;top:159px;font-size:12.6px;color:#2b2b2b;transform:scaleX(1.0286);">Temperature</span>
<span class="t" style="left:405.20px;top:159px;font-size:12.6px;color:#2b2b2b;transform:scaleX(0.9929);">Thermal Status</span>
<span class="t" style="left:519.63px;top:159px;font-size:12.6px;color:#2b2b2b;transform:scaleX(1.0733);">Network</span>
<span class="t" style="left:598.98px;top:159px;font-size:12.6px;color:#2b2b2b;transform:scaleX(1.0224);">Brightness</span>
<span class="t" style="left:688.96px;top:159px;font-size:12.6px;color:#2b2b2b;transform:scaleX(1.0436);">Battery</span>
<span class="t" style="left:24.87px;top:216px;font-size:16px;color:#222;font-weight:700;transform:scaleX(0.8267);">FPS</span>
<span class="t" style="left:39.00px;top:276px;font-size:10.8px;color:#5e5e5e;transform:scaleX(0.9565);">Avg(FPS)</span>
<span class="t" style="left:107.77px;top:276px;font-size:10.8px;color:#5e5e5e;transform:scaleX(1.0256);">Smooth(稳帧指数)</span>
<span class="t" style="left:233.04px;top:276px;font-size:10.8px;color:#5e5e5e;transform:scaleX(0.9645);">1%Low(FPS)</span>
<span class="t" style="left:316.05px;top:276px;font-size:10.8px;color:#5e5e5e;transform:scaleX(0.9535);">Std(FPS)</span>
<span class="t" style="left:380.80px;top:276px;font-size:10.8px;color:#5e5e5e;transform:scaleX(0.9318);">Var(FPS)</span>
<span class="t" style="left:443.47px;top:276px;font-size:10.8px;color:#5e5e5e;transform:scaleX(1.0286);">FPS&gt;=18 [%]</span>
<span class="t" style="left:531.47px;top:276px;font-size:10.8px;color:#5e5e5e;transform:scaleX(1.0317);">FPS&gt;=25 [%]</span>
<span class="t" style="left:619.76px;top:276px;font-size:10.8px;color:#5e5e5e;transform:scaleX(1.0368);">Drop(FPS) [/h]</span>
<span class="t" style="left:727.81px;top:276px;font-size:10.8px;color:#5e5e5e;transform:scaleX(0.9932);">Min(FPS)</span>
<span class="t" style="left:794.80px;top:276px;font-size:10.8px;color:#5e5e5e;transform:scaleX(1.0032);">Median(FPS)</span>
<span class="t" style="left:880.29px;top:276px;font-size:10.8px;color:#5e5e5e;transform:scaleX(1.0053);">MedRange(FPS)[%]</span>
<span class="t" style="left:999.02px;top:262px;font-size:10.8px;color:#5e5e5e;transform:scaleX(0.9848);">SmallJank(微小卡顿)</span>
<span class="t" style="left:1026.91px;top:276px;font-size:10.8px;color:#5e5e5e;transform:scaleX(1.0921);">(/10min)</span>
<span class="t" style="left:36.92px;top:306px;font-size:20.4px;color:#1f1f1f;font-weight:700;transform:scaleX(0.9813);">119.9</span>
<span class="t" style="left:144.87px;top:306px;font-size:20.4px;color:#1f1f1f;font-weight:700;transform:scaleX(0.9333);">0.1</span>
<span class="t" style="left:247.03px;top:306px;font-size:20.4px;color:#1f1f1f;font-weight:700;transform:scaleX(0.9688);">107</span>
<span class="t" style="left:323.58px;top:306px;font-size:20.4px;color:#1f1f1f;font-weight:700;transform:scaleX(0.9185);">1.1</span>
<span class="t" style="left:386.50px;top:306px;font-size:20.4px;color:#1f1f1f;font-weight:700;transform:scaleX(1.0010);">1.2</span>
<span class="t" style="left:459.99px;top:306px;font-size:20.4px;color:#1f1f1f;font-weight:700;transform:scaleX(1.0094);">100</span>
<span class="t" style="left:548.00px;top:306px;font-size:20.4px;color:#1f1f1f;font-weight:700;transform:scaleX(1.0010);">100</span>
<span class="t" style="left:648.51px;top:306px;font-size:20.4px;color:#1f1f1f;font-weight:700;transform:scaleX(0.9926);">9.8</span>
<span class="t" style="left:738.49px;top:306px;font-size:20.4px;color:#1f1f1f;font-weight:700;transform:scaleX(1.0143);">99</span>
<span class="t" style="left:810.31px;top:306px;font-size:20.4px;color:#1f1f1f;font-weight:700;transform:scaleX(0.9906);">120</span>
<span class="t" style="left:912.31px;top:306px;font-size:20.4px;color:#1f1f1f;font-weight:700;transform:scaleX(0.9906);">100</span>
<span class="t" style="left:1041.53px;top:306px;font-size:20.4px;color:#1f1f1f;font-weight:700;transform:scaleX(0.9741);">2.9</span>
<span class="t" style="left:36.00px;top:345px;font-size:10.8px;color:#5e5e5e;transform:scaleX(0.9706);">Jank(卡顿)</span>
<span class="t" style="left:38.89px;top:359px;font-size:10.8px;color:#5e5e5e;transform:scaleX(1.1053);">(/10min)</span>
<span class="t" style="left:121.51px;top:345px;font-size:10.8px;color:#5e5e5e;transform:scaleX(0.9943);">BigJank(严重卡顿)</span>
<span class="t" style="left:143.38px;top:359px;font-size:10.8px;color:#5e5e5e;transform:scaleX(1.1184);">(/10min)</span>
<span class="t" style="left:244.76px;top:359px;font-size:10.8px;color:#5e5e5e;transform:scaleX(1.0364);">Stutter(卡顿率) [%]</span>
<span class="t" style="left:360.00px;top:359px;font-size:10.8px;color:#5e5e5e;transform:scaleX(1.0359);">Avg(InterFrame)</span>
<span class="t" style="left:463.80px;top:359px;font-size:10.8px;color:#5e5e5e;transform:scaleX(1.0114);">Avg(FPS+InterFrame)</span>
<span class="t" style="left:593.00px;top:359px;font-size:10.8px;color:#5e5e5e;transform:scaleX(1.0228);">Avg(FTime) [ms]</span>
<span class="t" style="left:695.98px;top:359px;font-size:10.8px;color:#5e5e5e;transform:scaleX(1.0192);">Std(FTime)</span>
<span class="t" style="left:773.30px;top:359px;font-size:10.8px;color:#5e5e5e;transform:scaleX(1.0010);">Var(FTime)</span>
<span class="t" style="left:848.24px;top:359px;font-size:10.8px;color:#5e5e5e;transform:scaleX(1.0620);">FTime&gt;=100ms [%]</span>
<span class="t" style="left:969.74px;top:359px;font-size:10.8px;color:#5e5e5e;transform:scaleX(1.0568);">Delta(FTime)&gt;100ms [/h]</span>
<span class="t" style="left:54.04px;top:390px;font-size:20.4px;color:#1f1f1f;font-weight:700;transform:scaleX(0.9556);">0.8</span>
<span class="t" style="left:158.02px;top:390px;font-size:20.4px;color:#1f1f1f;font-weight:700;transform:scaleX(0.9815);">0.8</span>
<span class="t" style="left:285.00px;top:390px;font-size:20.4px;color:#1f1f1f;font-weight:700;transform:scaleX(1.0010);">0</span>
<span class="t" style="left:394.50px;top:390px;font-size:20.4px;color:#1f1f1f;font-weight:700;transform:scaleX(1.0010);">0</span>
<span class="t" style="left:492.82px;top:390px;font-size:20.4px;color:#1f1f1f;font-weight:700;transform:scaleX(0.9833);">119.9</span>
<span class="t" style="left:619.53px;top:390px;font-size:20.4px;color:#1f1f1f;font-weight:700;transform:scaleX(0.9741);">8.3</span>
<span class="t" style="left:709.84px;top:390px;font-size:20.4px;color:#1f1f1f;font-weight:700;transform:scaleX(0.9630);">0.8</span>
<span class="t" style="left:785.85px;top:390px;font-size:20.4px;color:#1f1f1f;font-weight:700;transform:scaleX(0.9519);">0.6</span>
<span class="t" style="left:892.85px;top:390px;font-size:20.4px;color:#1f1f1f;font-weight:700;transform:scaleX(0.9500);">0</span>
<span class="t" style="left:1026.30px;top:390px;font-size:20.4px;color:#1f1f1f;font-weight:700;transform:scaleX(0.9536);">4.9</span>
<span class="t" style="left:22.10px;top:430px;font-size:11.5px;color:#111;font-weight:700;transform:scaleX(0.9952);">FPS</span>
<span class="t" style="left:961.80px;top:429px;font-size:11px;color:#444;transform:scaleX(1.0010);">FPS(&gt;=)</span>
<span class="t" style="left:1029.00px;top:429px;font-size:10.5px;color:#333;transform:scaleX(1.0010);">18</span>
<span class="t" style="left:1085.00px;top:429px;font-size:10.5px;color:#333;transform:scaleX(0.9545);">25</span>
<span class="t" style="left:1128.55px;top:430px;font-size:10px;color:#4a7be0;transform:scaleX(1.0500);text-decoration:underline;">重置</span>
<span class="t" style="left:585.30px;top:458px;font-size:11px;color:#fff;transform:scaleX(1.0010);">label1</span>
<span class="t" style="left:28.04px;top:503px;font-size:10.2px;color:#4d4d4d;transform:scaleX(0.9562);">121</span>
<span class="t" style="left:28.04px;top:519px;font-size:10.2px;color:#4d4d4d;transform:scaleX(0.9562);">109</span>
<span class="t" style="left:34.10px;top:537px;font-size:10.2px;color:#4d4d4d;transform:scaleX(0.9273);">96</span>
<span class="t" style="left:34.10px;top:553px;font-size:10.2px;color:#4d4d4d;transform:scaleX(0.9273);">84</span>
<span class="t" style="left:33.08px;top:569px;font-size:10.2px;color:#4d4d4d;transform:scaleX(1.0200);">72</span>
<span class="t" style="left:34.10px;top:586px;font-size:10.2px;color:#4d4d4d;transform:scaleX(0.9273);">60</span>
<span class="t" style="left:34.10px;top:602px;font-size:10.2px;color:#4d4d4d;transform:scaleX(0.9273);">48</span>
<span class="t" style="left:34.10px;top:618px;font-size:10.2px;color:#4d4d4d;transform:scaleX(0.9273);">36</span>
<span class="t" style="left:34.10px;top:635px;font-size:10.2px;color:#4d4d4d;transform:scaleX(0.9273);">24</span>
<span class="t" style="left:33.08px;top:651px;font-size:10.2px;color:#4d4d4d;transform:scaleX(1.0200);">12</span>
<span class="t" style="left:39.40px;top:667px;font-size:10.2px;color:#4d4d4d;transform:scaleX(0.9800);">0</span>
<span class="t" style="left:53.60px;top:680px;font-size:10.2px;color:#4d4d4d;transform:scaleX(0.9280);">00:00</span>
<span class="t" style="left:99.65px;top:680px;font-size:10.2px;color:#4d4d4d;transform:scaleX(0.9280);">01:18</span>
<span class="t" style="left:157.90px;top:680px;font-size:10.2px;color:#4d4d4d;transform:scaleX(0.9280);">02:36</span>
<span class="t" style="left:216.15px;top:680px;font-size:10.2px;color:#4d4d4d;transform:scaleX(0.9280);">03:54</span>
<span class="t" style="left:274.40px;top:680px;font-size:10.2px;color:#4d4d4d;transform:scaleX(0.9280);">05:12</span>
<span class="t" style="left:332.65px;top:680px;font-size:10.2px;color:#4d4d4d;transform:scaleX(0.9280);">06:30</span>
<span class="t" style="left:390.90px;top:680px;font-size:10.2px;color:#4d4d4d;transform:scaleX(0.9280);">07:48</span>
<span class="t" style="left:449.15px;top:680px;font-size:10.2px;color:#4d4d4d;transform:scaleX(0.9280);">09:06</span>
<span class="t" style="left:506.43px;top:680px;font-size:10.2px;color:#4d4d4d;transform:scaleX(0.9667);">10:24</span>
<span class="t" style="left:564.64px;top:680px;font-size:10.2px;color:#4d4d4d;transform:scaleX(1.0087);">11:42</span>
<span class="t" style="left:622.93px;top:680px;font-size:10.2px;color:#4d4d4d;transform:scaleX(0.9667);">13:00</span>
<span class="t" style="left:681.18px;top:680px;font-size:10.2px;color:#4d4d4d;transform:scaleX(0.9667);">14:18</span>
<span class="t" style="left:739.43px;top:680px;font-size:10.2px;color:#4d4d4d;transform:scaleX(0.9667);">15:36</span>
<span class="t" style="left:797.68px;top:680px;font-size:10.2px;color:#4d4d4d;transform:scaleX(0.9667);">16:54</span>
<span class="t" style="left:855.93px;top:680px;font-size:10.2px;color:#4d4d4d;transform:scaleX(0.9667);">18:12</span>
<span class="t" style="left:914.18px;top:680px;font-size:10.2px;color:#4d4d4d;transform:scaleX(0.9667);">19:30</span>
<span class="t" style="left:973.40px;top:680px;font-size:10.2px;color:#4d4d4d;transform:scaleX(0.9280);">20:48</span>
<span class="t" style="left:1031.65px;top:680px;font-size:10.2px;color:#4d4d4d;transform:scaleX(0.9280);">22:06</span>
<span class="t" style="left:1089.90px;top:680px;font-size:10.2px;color:#4d4d4d;transform:scaleX(0.9280);">23:24</span>
<span class="t" style="left:1157.92px;top:486px;font-size:10.5px;color:#4d4d4d;transform:scaleX(0.8750);">1</span>
<span class="t" style="left:1158.30px;top:666px;font-size:10.5px;color:#4d4d4d;transform:scaleX(0.7833);">0</span>
<span class="t" style="left:354.17px;top:714px;font-size:10px;color:#222;transform:scaleX(0.8333);">FPS</span>
<span class="t" style="left:403.99px;top:714px;font-size:10px;color:#b0b0b0;transform:scaleX(1.0091);">Smooth</span>
<span class="t" style="left:472.38px;top:714px;font-size:10px;color:#222;transform:scaleX(0.9193);">1%Low(FPS)</span>
<span class="t" style="left:559.78px;top:714px;font-size:10px;color:#b0b0b0;transform:scaleX(0.9244);">SmallJank</span>
<span class="t" style="left:637.30px;top:714px;font-size:10px;color:#b0b0b0;transform:scaleX(0.8905);">Jank</span>
<span class="t" style="left:690.36px;top:714px;font-size:10px;color:#b0b0b0;transform:scaleX(0.9441);">BigJank</span>
<span class="t" style="left:757.70px;top:714px;font-size:10px;color:#b0b0b0;transform:scaleX(0.9966);">Stutter</span>
<span class="t" style="left:822.04px;top:714px;font-size:10px;color:#b0b0b0;transform:scaleX(0.9646);">InterFrame</span>
<span class="t" style="left:1090.24px;top:713px;font-size:9px;color:#4a7be0;transform:scaleX(1.0640);">全选中</span>
<span class="t" style="left:966.30px;top:632px;font-size:22.3px;color:#000;font-weight:700;transform:scaleX(0.8713);">www.ithome.com</span>
</body>
</html>
